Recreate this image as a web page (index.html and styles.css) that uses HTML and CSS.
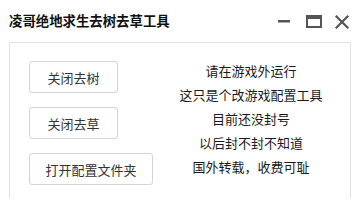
FILE: index.html
```html
<!DOCTYPE html>
<html lang="zh-CN">
<head>
  <meta charset="UTF-8">
  <meta name="viewport" content="width=device-width, initial-scale=1.0">
  <title>凌哥绝地求生去树去草工具</title>
  <link rel="stylesheet" href="styles.css">
</head>
<body>
  <div class="window">
    <div class="titlebar">
      <div class="title">凌哥绝地求生去树去草工具</div>
      <svg class="controls" width="72" height="20" viewBox="0 0 72 20">
        <!-- 最小化 -->
        <rect x="0" y="8" width="12" height="2.5" fill="#555"/>
        <!-- 最大化 -->
        <rect x="29" y="4" width="14" height="11" fill="none" stroke="#555" stroke-width="2"/>
        <rect x="29" y="4" width="14" height="3" fill="#555"/>
        <!-- 关闭 -->
        <path d="M58.5 4.5 L69.5 15.5 M69.5 4.5 L58.5 15.5" stroke="#555" stroke-width="2.2" stroke-linecap="square"/>
      </svg>
    </div>

    <div class="panel">
      <div class="actions">
        <button class="btn">关闭去树</button>
        <button class="btn">关闭去草</button>
        <button class="btn">打开配置文件夹</button>
      </div>
      <div class="notes">
        <p>请在游戏外运行</p>
        <p>这只是个改游戏配置工具</p>
        <p>目前还没封号</p>
        <p>以后封不封不知道</p>
        <p>国外转载，收费可耻</p>
      </div>
    </div>
  </div>
</body>
</html>
```

FILE: styles.css
```css
:root {
  --text: #222222;
  --border: #e3e3e3;
  --btn-border: #d4d4d4;
  --icon: #555555;
}

body {
  margin: 0;
  background: #ffffff;
  color: var(--text);
  font-family: "Noto Sans CJK SC", "Noto Sans", sans-serif;
}

.window {
  width: 360px;
  height: 200px;
  box-sizing: border-box;
  padding: 0 9px;
}

.titlebar {
  height: 42px;
  display: flex;
  align-items: center;
  justify-content: space-between;
}

.title {
  font-size: 13.4px;
  font-weight: 700;
  color: #111111;
  margin-top: -3px;
}

.controls {
  margin-top: 1px;
  margin-right: 1px;
}

.panel {
  height: 156px;
  box-sizing: border-box;
  border: 1px solid var(--border);
  border-bottom: none;
  display: flex;
}

.actions {
  width: 142px;
  box-sizing: border-box;
  padding: 18px 0 0 19px;
  display: flex;
  flex-direction: column;
  align-items: flex-start;
  gap: 14px;
}

.btn {
  height: 32px;
  padding: 0;
  font-family: inherit;
  font-size: 13px;
  color: #333333;
  background: #ffffff;
  border: 1px solid var(--btn-border);
  border-radius: 3px;
  cursor: pointer;
}

.btn:first-child,
.btn:nth-child(2) {
  width: 89px;
}

.btn:last-child {
  width: 124px;
}

.notes {
  flex: 1;
  padding-top: 16px;
  text-align: center;
}

.notes p {
  margin: 0;
  font-size: 13px;
  line-height: 24px;
  color: #1a1a1a;
}
```
